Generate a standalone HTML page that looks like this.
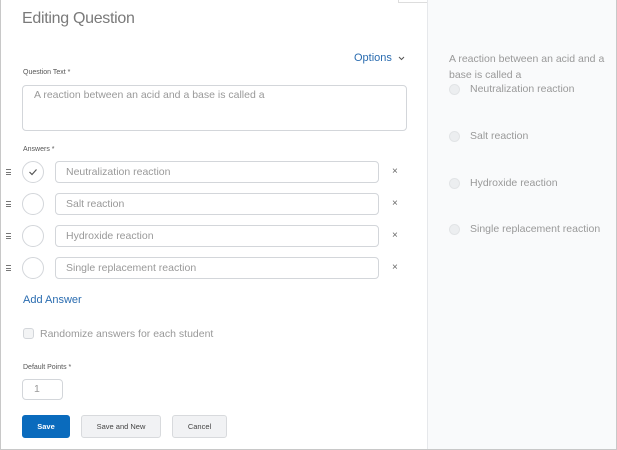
<!DOCTYPE html>
<html><head><style>
*{box-sizing:border-box;margin:0;padding:0}
body{width:617px;height:450px;overflow:hidden;background:#fff;font-family:"Liberation Sans",sans-serif;position:relative}
.frame{position:absolute;left:0;top:0;width:617px;height:450px;border:1px solid #c8c8c8;border-top:none}
.right{position:absolute;left:427px;top:0;width:189px;height:449px;background:#f9fafb;border-left:1px solid #e6e8eb}
.a{position:absolute}
.t{color:#999;font-size:10.5px}
.lbl{font-size:7px;color:#555}
.box{border:1px solid #d3d6da;border-radius:4px;background:#fff}
.circ{width:22px;height:22px;border:1px solid #d3d6da;border-radius:50%;background:#fff}
.rc{width:11px;height:11px;border-radius:50%;background:#eceef0;border:1px solid #e2e4e6}
.btn{border:1px solid #d8dadd;border-radius:3px;background:#f1f2f4;font-size:7.5px;color:#444;text-align:center;line-height:22px;height:23px}
.x{color:#666;font-size:10px}
.h{width:5px;height:6px;border-top:1px solid #777;border-bottom:1px solid #777}
.h:after{content:"";display:block;margin-top:1.5px;border-top:1px solid #777}
</style></head><body>
<div class="a" style="left:398px;top:0;width:51px;height:3px;border:1px solid #ddd;border-top:none;background:#fff"></div>
<div class="right"></div>
<div class="frame"></div>
<div class="a" style="left:22px;top:10px;font-size:16px;color:#7a7a7a;letter-spacing:-0.3px">Editing Question</div>
<div class="a" style="left:354px;top:52px;font-size:11px;color:#2a6cb0">Options</div>
<svg class="a" style="left:398px;top:56px" width="7" height="5"><path d="M1 1L3.5 3.5L6 1" stroke="#555" fill="none" stroke-width="1"/></svg>
<div class="a lbl" style="left:23px;top:69px">Question Text *</div>
<div class="a box" style="left:22px;top:85px;width:385px;height:46px"></div>
<div class="a t" style="left:34px;top:89px">A reaction between an acid and a base is called a</div>
<div class="a lbl" style="left:23px;top:146px">Answers *</div>

<div class="a h" style="left:6px;top:169px"></div>
<div class="a circ" style="left:22px;top:161px"></div>
<svg class="a" style="left:28px;top:167px" width="10" height="10"><path d="M1.5 5L4 7.5L8.5 2.5" stroke="#555" fill="none" stroke-width="1.2"/></svg>
<div class="a box" style="left:55px;top:161px;width:324px;height:22px"></div>
<div class="a t" style="left:66px;top:166px">Neutralization reaction</div>
<div class="a x" style="left:392px;top:166px">×</div>

<div class="a h" style="left:6px;top:201px"></div>
<div class="a circ" style="left:22px;top:193px"></div>
<div class="a box" style="left:55px;top:193px;width:324px;height:22px"></div>
<div class="a t" style="left:66px;top:198px">Salt reaction</div>
<div class="a x" style="left:392px;top:198px">×</div>

<div class="a h" style="left:6px;top:233px"></div>
<div class="a circ" style="left:22px;top:225px"></div>
<div class="a box" style="left:55px;top:225px;width:324px;height:22px"></div>
<div class="a t" style="left:66px;top:230px">Hydroxide reaction</div>
<div class="a x" style="left:392px;top:230px">×</div>

<div class="a h" style="left:6px;top:265px"></div>
<div class="a circ" style="left:22px;top:257px"></div>
<div class="a box" style="left:55px;top:257px;width:324px;height:22px"></div>
<div class="a t" style="left:66px;top:262px">Single replacement reaction</div>
<div class="a x" style="left:392px;top:262px">×</div>

<div class="a" style="left:23px;top:294px;font-size:11px;color:#2a6cb0">Add Answer</div>
<div class="a" style="left:23px;top:328px;width:11px;height:11px;border:1px solid #d3d6da;border-radius:3px;background:#f3f4f5"></div>
<div class="a t" style="left:40px;top:328px">Randomize answers for each student</div>
<div class="a lbl" style="left:23px;top:364px">Default Points *</div>
<div class="a box" style="left:22px;top:379px;width:41px;height:21px"></div>
<div class="a t" style="left:34px;top:383px">1</div>
<div class="a btn" style="left:22px;top:415px;width:48px;background:#0a6bbd;border-color:#0a6bbd;color:#fff;font-weight:bold">Save</div>
<div class="a btn" style="left:81px;top:415px;width:80px">Save and New</div>
<div class="a btn" style="left:172px;top:415px;width:55px">Cancel</div>

<div class="a t" style="left:449px;top:51px;line-height:16px;width:160px">A reaction between an acid and a base is called a</div>
<div class="a rc" style="left:449px;top:84px"></div>
<div class="a t" style="left:470px;top:83px">Neutralization reaction</div>
<div class="a rc" style="left:449px;top:131px"></div>
<div class="a t" style="left:470px;top:130px">Salt reaction</div>
<div class="a rc" style="left:449px;top:178px"></div>
<div class="a t" style="left:470px;top:177px">Hydroxide reaction</div>
<div class="a rc" style="left:449px;top:224px"></div>
<div class="a t" style="left:470px;top:223px">Single replacement reaction</div>
</body></html>
